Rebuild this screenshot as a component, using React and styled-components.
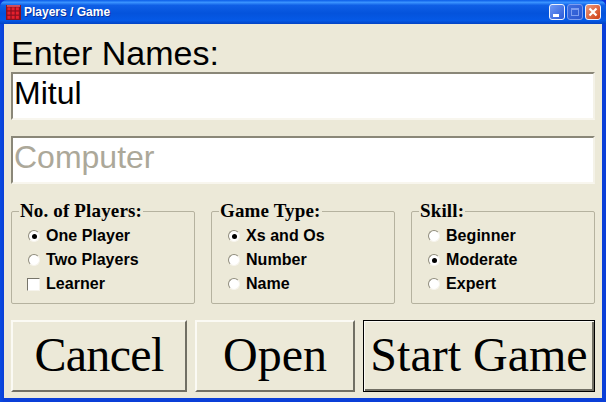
import { createGlobalStyle, styled } from "styled-components"

const GlobalStyle = createGlobalStyle`
  html, body {
    margin: 0;
    padding: 0;
    background: #0831d9;
  }
`

const Window = styled.div`
  width: 606px;
  height: 402px;
  display: flex;
  flex-direction: column;
  overflow: hidden;
  background: linear-gradient(90deg, #0a4be0 0, #0a3fd8 4px, #0a3fd8 100%);
  border-radius: 7px 7px 0 0;
`

const TitleBar = styled.div`
  height: 24px;
  flex: none;
  display: flex;
  align-items: center;
  gap: 3px;
  padding: 0 5px 0 6px;
  background: linear-gradient(180deg, #0a5ce8 0%, #3a93ff 10%, #0f5fe6 22%, #0453dc 55%, #0559e6 85%, #0343c4 100%);
`

const Title = styled.span`
  flex: 1;
  font: bold 12px "Liberation Sans", Arial, sans-serif;
  color: #fff;
  text-shadow: 1px 1px 0 #0b2f98;
`

const Controls = styled.div`
  display: flex;
  gap: 2px;
`

const CtlButton = styled.div`
  box-sizing: border-box;
  width: 16px;
  height: 16px;
  border: 1px solid ${(p) => (p.$off ? "#7d9df0" : "#eef2fd")};
  border-radius: 3px;
  background: ${(p) => p.$bg};
  display: flex;
  align-items: center;
  justify-content: center;
`

const Body = styled.div`
  flex: 1;
  margin: 0 4px 4px 4px;
  padding: 11px 6px 6px 7px;
  background: #ece9d8;
  display: flex;
  flex-direction: column;
`

const Heading = styled.div`
  font: 34px/37px "Liberation Sans", Arial, sans-serif;
  color: #000;
  height: 37px;
`

const NameInput = styled.input`
  box-sizing: border-box;
  width: 584px;
  height: 48px;
  margin-bottom: 16px;
  padding: 0 2px 6px 1px;
  border-style: solid;
  border-width: 2px;
  border-color: #8a8778 #f4f2e8 #f8f6ee #8a8778;
  outline: none;
  background: #fff;
  font: 32px "Liberation Sans", Arial, sans-serif;
  color: #000;

  &:disabled {
    color: #aca899;
  }
`

const GroupRow = styled.div`
  display: flex;
  gap: 16px;
`

const Group = styled.fieldset`
  box-sizing: border-box;
  width: 184px;
  height: 104px;
  margin: 0;
  padding: 2px 0 0 16px;
  border: 1px solid #b5b29f;
  border-radius: 2px;
  display: flex;
  flex-direction: column;
`

const Legend = styled.legend`
  padding: 0 1px;
  margin-left: -9px;
  font: bold 19px/22px "Liberation Serif", "Times New Roman", serif;
  letter-spacing: 0.15px;
  color: #000;
`

const Option = styled.div`
  height: 24px;
  display: flex;
  align-items: center;
  gap: 6px;
  font: bold 16px "Liberation Sans", Arial, sans-serif;
  letter-spacing: 0.05px;
  color: #000;
`

const Radio = styled.span`
  box-sizing: border-box;
  width: 12px;
  height: 12px;
  flex: none;
  border-radius: 50%;
  border: 1px solid;
  border-color: #8f8c7c #f6f4ec #f6f4ec #8f8c7c;
  background: #fff;
  display: flex;
  align-items: center;
  justify-content: center;

  &::after {
    content: "";
    width: 5px;
    height: 5px;
    border-radius: 50%;
    background: ${(p) => (p.$on ? "#000" : "transparent")};
  }
`

const Check = styled.span`
  box-sizing: border-box;
  width: 13px;
  height: 13px;
  flex: none;
  margin-left: -1px;
  border: 1px solid;
  border-color: #77756a #f6f4ec #f6f4ec #77756a;
  background: #fff;
`

const ButtonRow = styled.div`
  display: flex;
  gap: 8px;
  margin-top: 16px;
`

const Button = styled.button`
  box-sizing: border-box;
  width: ${(p) => p.$w}px;
  height: 72px;
  padding: 0 0 4px 0;
  background: #ece9d8;
  border-style: solid;
  border-width: ${(p) => (p.$primary ? "1px" : "2px")};
  border-color: ${(p) => (p.$primary ? "#000" : "#fbfaf4 #716f64 #716f64 #fbfaf4")};
  box-shadow: ${(p) => (p.$primary ? "inset 1px 1px 0 #fbfaf4, inset -2px -2px 0 #716f64" : "none")};
  font: 48px "Liberation Serif", "Times New Roman", serif;
  letter-spacing: ${(p) => p.$track || 0}px;
  color: #000;
  white-space: nowrap;
  overflow: hidden;
`

function AppIcon() {
  const cells = []
  for (let y = 0; y < 3; y++) {
    for (let x = 0; x < 3; x++) {
      cells.push(<rect key={`${x}-${y}`} x={1.5 + x * 4.5} y={2.5 + y * 4.5} width="3.2" height="3.2" fill="#e8202c" />)
    }
  }
  return (
    <svg width="15" height="15" viewBox="0 0 16 16">
      <rect x="0" y="0" width="16" height="16" fill="#8a1020" />
      <rect x="1" y="0" width="14" height="2" fill="#d05060" />
      {cells}
    </svg>
  )
}

const players = [
  { label: "One Player", on: true },
  { label: "Two Players" },
  { label: "Learner", check: true }
]
const types = [{ label: "Xs and Os", on: true }, { label: "Number" }, { label: "Name" }]
const skills = [{ label: "Beginner" }, { label: "Moderate", on: true }, { label: "Expert" }]

function OptionGroup({ title, items }) {
  return (
    <Group>
      <Legend>{title}</Legend>
      {items.map((e) => (
        <Option key={e.label}>
          {e.check ? <Check /> : <Radio $on={e.on} />}
          {e.label}
        </Option>
      ))}
    </Group>
  )
}

function App() {
  return (
    <Window>
      <GlobalStyle />
      <TitleBar>
        <AppIcon />
        <Title>Players / Game</Title>
        <Controls>
          <CtlButton $bg="linear-gradient(135deg, #6f99f5, #2a5ad8)">
            <svg width="14" height="14" viewBox="0 0 14 14"><rect x="3" y="9" width="6" height="3" fill="#fff" /></svg>
          </CtlButton>
          <CtlButton $bg="linear-gradient(135deg, #3f6fe0, #2a55cf)" $off>
            <svg width="14" height="14" viewBox="0 0 14 14"><rect x="3.5" y="3.5" width="7" height="7" fill="none" stroke="#7d9df0" /><rect x="3" y="3" width="8" height="2" fill="#7d9df0" /></svg>
          </CtlButton>
          <CtlButton $bg="linear-gradient(135deg, #ec9a7c, #cf3d12)">
            <svg width="14" height="14" viewBox="0 0 14 14"><path d="M3.5 3.5 L10.5 10.5 M10.5 3.5 L3.5 10.5" stroke="#fff" strokeWidth="2.2" /></svg>
          </CtlButton>
        </Controls>
      </TitleBar>
      <Body>
        <Heading>Enter Names:</Heading>
        <NameInput defaultValue="Mitul" />
        <NameInput defaultValue="Computer" disabled />
        <GroupRow>
          <OptionGroup title="No. of Players:" items={players} />
          <OptionGroup title="Game Type:" items={types} />
          <OptionGroup title="Skill:" items={skills} />
        </GroupRow>
        <ButtonRow>
          <Button $w={176} $track={-0.7}>Cancel</Button>
          <Button $w={160}>Open</Button>
          <Button $w={232} $primary>Start Game</Button>
        </ButtonRow>
      </Body>
    </Window>
  )
}

export default App
